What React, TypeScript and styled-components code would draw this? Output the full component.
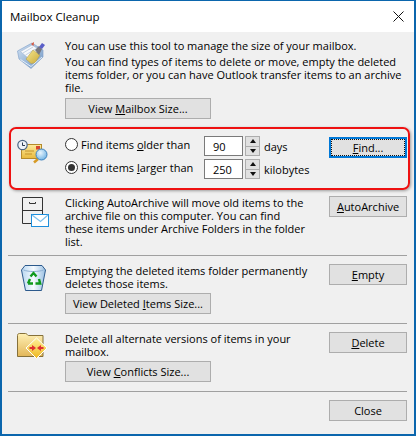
import React from "react";
import styled, { createGlobalStyle } from "styled-components";

const GlobalStyle = createGlobalStyle`
  html, body {
    margin: 0;
    padding: 0;
    background: #f0f0f0;
  }
`;

const Window = styled.div`
  position: relative;
  box-sizing: border-box;
  width: 416px;
  height: 436px;
  display: flex;
  flex-direction: column;
  background: #f0f0f0;
  border: solid #0b66ad;
  border-width: 1px 2px 2px 2px;
  font-family: "Open Sans", "Noto Sans", sans-serif;
  font-size: 11px;
  line-height: 13px;
  color: #000;
  overflow: hidden;
`;

const TitleBar = styled.div`
  height: 31px;
  flex: none;
  display: flex;
  align-items: center;
  justify-content: space-between;
  padding: 0 10px 0 8px;
  background: #fff;
  font-size: 11.5px;
`;

const Body = styled.div`
  flex: 1;
  display: flex;
  flex-direction: column;
  padding: 7px 7px 0 6px;
`;

const Section = styled.div<{ $height: number; $rule?: boolean }>`
  box-sizing: border-box;
  height: ${(p) => p.$height}px;
  flex: none;
  display: grid;
  grid-template-columns: 57px 264px 78px;
  border-bottom: ${(p) => (p.$rule ? "1px solid #a0a0a0" : "none")};
`;

const IconCell = styled.div<{ $top: number; $left: number }>`
  padding: ${(p) => p.$top}px 0 0 ${(p) => p.$left}px;

  svg {
    display: block;
  }
`;

const TextCell = styled.div<{ $top?: number }>`
  display: flex;
  flex-direction: column;
  align-items: flex-start;
  padding-top: ${(p) => p.$top ?? 0}px;
`;

const Para = styled.p<{ $gap?: number }>`
  margin: 0 0 ${(p) => p.$gap ?? 0}px;
  white-space: nowrap;
`;

const ActionCell = styled.div<{ $top: number }>`
  padding-top: ${(p) => p.$top}px;
`;

const Button = styled.button<{ $wide?: boolean; $focused?: boolean }>`
  box-sizing: border-box;
  display: block;
  width: ${(p) => (p.$wide ? "146px" : "78px")};
  height: 21px;
  margin: 0;
  padding: 0;
  background: #e1e1e1;
  border: ${(p) => (p.$focused ? "2px solid #0078d7" : "1px solid #adadad")};
  font: inherit;
  color: #000;
  position: relative;
  white-space: nowrap;

  ${(p) =>
    p.$focused &&
    `
    &::after {
      content: "";
      position: absolute;
      inset: 0;
      border: 1px dotted #111;
    }
  `}
`;

const FindGrid = styled.div`
  display: grid;
  grid-template-columns: 139px 41px 19px auto;
  grid-auto-rows: 20px;
  row-gap: 3px;
  align-items: center;
  padding-top: 11px;
`;

const RadioLabel = styled.label`
  display: flex;
  align-items: center;
  gap: 3px;
  margin-bottom: 4px;
  white-space: nowrap;
`;

const RadioDot = styled.span<{ $checked?: boolean }>`
  box-sizing: border-box;
  width: 13px;
  height: 13px;
  flex: none;
  border-radius: 50%;
  border: 1px solid #333;
  background: #fff;
  display: flex;
  align-items: center;
  justify-content: center;

  &::after {
    content: "";
    width: 7px;
    height: 7px;
    border-radius: 50%;
    background: ${(p) => (p.$checked ? "#333" : "transparent")};
  }
`;

const NumberBox = styled.div`
  box-sizing: border-box;
  width: 39px;
  height: 20px;
  padding: 3px 0 0 8px;
  background: #fff;
  border: 1px solid #7a7a7a;
`;

const Spinner = styled.div`
  box-sizing: border-box;
  width: 15px;
  height: 20px;
  display: flex;
  flex-direction: column;
  background: #e1e1e1;
  border: 1px solid #adadad;
`;

const SpinnerPart = styled.div<{ $down?: boolean }>`
  flex: 1;
  display: flex;
  align-items: center;
  justify-content: center;
  border-top: ${(p) => (p.$down ? "1px solid #adadad" : "none")};

  &::after {
    content: "";
    border-left: 3.5px solid transparent;
    border-right: 3.5px solid transparent;
    ${(p) => (p.$down ? "border-top: 4px solid #111;" : "border-bottom: 4px solid #111;")}
  }
`;

const Unit = styled.span`
  white-space: nowrap;
`;

const Highlight = styled.div`
  position: absolute;
  left: 7px;
  top: 126px;
  width: 401px;
  height: 63px;
  box-sizing: border-box;
  border: 2px solid #ee1111;
  border-radius: 7px;
  box-shadow: 1px 1px 3px rgba(0, 0, 0, 0.35);
  pointer-events: none;
`;

const CloseGlyph = () => (
  <svg width="11" height="11" viewBox="0 0 11 11">
    <path d="M.5.5l10 10M10.5.5l-10 10" stroke="#111" strokeWidth="1" fill="none" />
  </svg>
);

const CleanupIcon = () => (
  <svg width="31" height="27" viewBox="0 0 31 27">
    <defs>
      <linearGradient id="tray" x1="0" y1="0" x2="1" y2="1">
        <stop offset="0" stopColor="#d3e3f4" />
        <stop offset="1" stopColor="#6f96c4" />
      </linearGradient>
      <linearGradient id="brush" x1="0" y1="0" x2="1" y2="1">
        <stop offset="0" stopColor="#f7e88f" />
        <stop offset="1" stopColor="#c9a93a" />
      </linearGradient>
    </defs>
    <path d="M0.500 9L15 1l11 7v7L14 26.500 2 17z" fill="url(#tray)" stroke="#86a5cb" strokeWidth=".7" />
    <path d="M3.500 9.500L15 3l8 5-12 8z" fill="#f6f8fb" stroke="#9fb4d0" strokeWidth=".6" />
    <path d="M6 11l10-6M8.500 13l10-6" stroke="#b8c8dc" strokeWidth=".8" />
    <path d="M14 2l3-2-.5 4z" fill="#d9583f" />
    <path d="M9 17l7-9 7 5-5 8-4 .5z" fill="url(#brush)" stroke="#a8954d" strokeWidth=".5" />
    <path d="M18 8l4-4 3 3-3 6z" fill="#77777f" />
    <path d="M22 5l3-4 3 2-3 4z" fill="#5a5fc8" />
    <path d="M3.500 17.500L14 24.500 25 15" fill="none" stroke="#e2edf8" strokeWidth="1" />
  </svg>
);

const FindIcon = () => (
  <svg width="31" height="26" viewBox="0 0 31 26">
    <defs>
      <linearGradient id="env" x1="0" y1="0" x2="0" y2="1">
        <stop offset="0" stopColor="#fdeb9e" />
        <stop offset="1" stopColor="#e9b93c" />
      </linearGradient>
      <radialGradient id="lens" cx=".4" cy=".35" r=".7">
        <stop offset="0" stopColor="#e8f5fd" />
        <stop offset="1" stopColor="#6fb2e4" />
      </radialGradient>
    </defs>
    <rect x="4.500" y="5.500" width="20" height="14" fill="url(#env)" stroke="#b58a2a" />
    <rect x="19" y="7" width="4" height="3.500" fill="#d6462f" />
    <path d="M8 12h9M8 15h7" stroke="#c4922a" strokeWidth="1" />
    <circle cx="5.500" cy="6" r="4.700" fill="#eef3f9" stroke="#4d6785" strokeWidth="1.200" />
    <path d="M5.500 3.500V6.500h2.500" fill="none" stroke="#2b3b50" strokeWidth="1" />
    <path d="M21 20l-4 3.500" stroke="#d79a25" strokeWidth="2.500" />
    <circle cx="24.500" cy="15.500" r="5.500" fill="url(#lens)" stroke="#3f82bd" />
  </svg>
);

const ArchiveIcon = () => (
  <svg width="27" height="30" viewBox="0 0 27 30">
    <path d="M.5.500h20v16.500M.5.500v26h8.500M.5 13.500h20" fill="none" stroke="#333" strokeWidth="1" />
    <path d="M7.500 5v1.500h6V5" fill="none" stroke="#333" strokeWidth="1" />
    <rect x="9.500" y="17.500" width="17" height="12" fill="#fff" stroke="#1e8fdc" strokeWidth="1" />
    <path d="M10 18l8.500 6.500L26 18" fill="none" stroke="#7cc0ec" strokeWidth="1.200" />
  </svg>
);

const BinIcon = () => (
  <svg width="25" height="26" viewBox="0 0 25 26">
    <defs>
      <linearGradient id="bin" x1="0" y1="0" x2="1" y2="0">
        <stop offset="0" stopColor="#b8d6f0" />
        <stop offset=".5" stopColor="#f6fbff" />
        <stop offset="1" stopColor="#9ac0e2" />
      </linearGradient>
    </defs>
    <path d="M.5 5L4 .5h17L24.500 5l-4 20.500h-16z" fill="url(#bin)" stroke="#2d5a8c" strokeWidth="1" />
    <path d="M2.500 5c5 2 15 2 20 0" fill="none" stroke="#8fb1d3" strokeWidth="1" />
    <path d="M9.500 11.500l3-3.500 3 3.500M18 14l1.200 4.500H14.500M7 18.500h5M7 18.500l2-4.500" fill="none" stroke="#0f9a1c" strokeWidth="2.400" />
  </svg>
);

const ConflictIcon = () => (
  <svg width="31" height="26" viewBox="0 0 31 26">
    <defs>
      <linearGradient id="folder" x1="0" y1="0" x2="0" y2="1">
        <stop offset="0" stopColor="#fff0b4" />
        <stop offset="1" stopColor="#e2b659" />
      </linearGradient>
      <linearGradient id="diamond" x1="0" y1="0" x2="0" y2="1">
        <stop offset="0" stopColor="#fff09a" />
        <stop offset="1" stopColor="#eeb71f" />
      </linearGradient>
    </defs>
    <path d="M.5 2.500C.5 1 1.500.5 2.500.5h6c1.500 0 2 2 3 2h14.500v21H.5z" fill="url(#folder)" stroke="#85703a" />
    <path d="M19.500 5L30 15 19.500 25.500 9 15z" fill="url(#diamond)" stroke="#fff" strokeWidth="1" />
    <path d="M19 15l-4-3v2h-2.500v2H15v2zM20 15l4-3v2h2.500v2H24v2z" fill="#e03030" />
  </svg>
);

export default function App() {
  return (
    <>
      <GlobalStyle />
      <Window>
        <TitleBar>
          <span>Mailbox Cleanup</span>
          <CloseGlyph />
        </TitleBar>
        <Body>
          <Section $height={86}>
            <IconCell $top={3} $left={9}>
              <CleanupIcon />
            </IconCell>
            <TextCell>
              <Para $gap={3}>You can use this tool to manage the size of your mailbox.</Para>
              <Para $gap={4}>
                You can find types of items to delete or move, empty the deleted
                <br />
                items folder, or you can have Outlook transfer items to an archive
                <br />
                file.
              </Para>
              <Button $wide>
                View <u>M</u>ailbox Size...
              </Button>
            </TextCell>
          </Section>
          <Section $height={70}>
            <IconCell $top={14} $left={9}>
              <FindIcon />
            </IconCell>
            <FindGrid>
              <RadioLabel>
                <RadioDot />
                <span>
                  Find items <u>o</u>lder than
                </span>
              </RadioLabel>
              <NumberBox>90</NumberBox>
              <Spinner>
                <SpinnerPart />
                <SpinnerPart $down />
              </Spinner>
              <Unit>days</Unit>
              <RadioLabel>
                <RadioDot $checked />
                <span>
                  Find items <u>l</u>arger than
                </span>
              </RadioLabel>
              <NumberBox>250</NumberBox>
              <Spinner>
                <SpinnerPart />
                <SpinnerPart $down />
              </Spinner>
              <Unit>kilobytes</Unit>
            </FindGrid>
            <ActionCell $top={12}>
              <Button $focused>
                <u>F</u>ind...
              </Button>
            </ActionCell>
          </Section>
          <Section $height={61} $rule>
            <IconCell $top={2} $left={14}>
              <ArchiveIcon />
            </IconCell>
            <TextCell $top={1}>
              <Para>
                Clicking AutoArchive will move old items to the
                <br />
                archive file on this computer. You can find
                <br />
                these items under Archive Folders in the folder
                <br />
                list.
              </Para>
            </TextCell>
            <ActionCell $top={1}>
              <Button>
                <u>A</u>utoArchive
              </Button>
            </ActionCell>
          </Section>
          <Section $height={68} $rule>
            <IconCell $top={9} $left={13}>
              <BinIcon />
            </IconCell>
            <TextCell $top={8}>
              <Para $gap={3}>
                Emptying the deleted items folder permanently
                <br />
                deletes those items.
              </Para>
              <Button $wide>
                View Deleted <u>I</u>tems Size...
              </Button>
            </TextCell>
            <ActionCell $top={8}>
              <Button>
                <u>E</u>mpty
              </Button>
            </ActionCell>
          </Section>
          <Section $height={68} $rule>
            <IconCell $top={9} $left={9}>
              <ConflictIcon />
            </IconCell>
            <TextCell $top={8}>
              <Para $gap={3}>
                Delete all alternate versions of items in your
                <br />
                mailbox.
              </Para>
              <Button $wide>
                View <u>C</u>onflicts Size...
              </Button>
            </TextCell>
            <ActionCell $top={8}>
              <Button>
                <u>D</u>elete
              </Button>
            </ActionCell>
          </Section>
          <Section $height={42}>
            <span />
            <span />
            <ActionCell $top={8}>
              <Button>Close</Button>
            </ActionCell>
          </Section>
        </Body>
        <Highlight />
      </Window>
    </>
  );
}
